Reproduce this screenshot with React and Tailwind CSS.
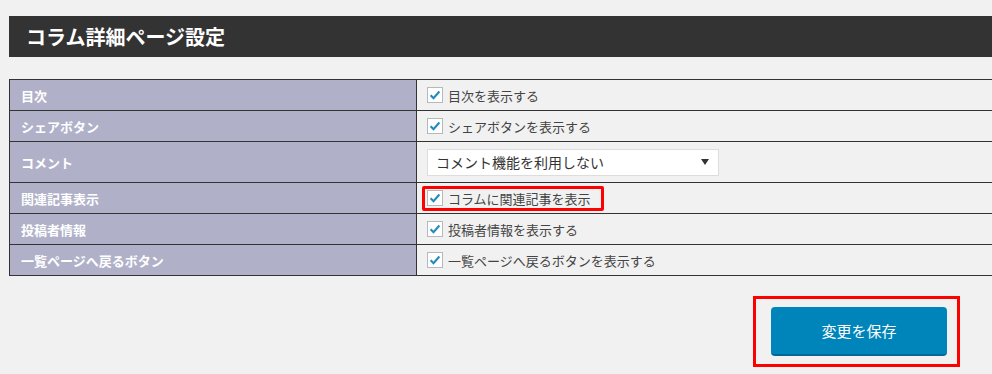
import React from 'react';

const rows = [
  { label: '目次', text: '目次を表示する' },
  { label: 'シェアボタン', text: 'シェアボタンを表示する' },
  { label: 'コメント', select: 'コメント機能を利用しない' },
  { label: '関連記事表示', text: 'コラムに関連記事を表示', marked: true },
  { label: '投稿者情報', text: '投稿者情報を表示する' },
  { label: '一覧ページへ戻るボタン', text: '一覧ページへ戻るボタンを表示する' },
];

const Check = () => (
  <span className="w-[16px] h-[16px] border border-[#b4b9be] bg-white flex items-center justify-center shrink-0">
    <svg viewBox="0 0 16 16" className="w-[14px] h-[14px]">
      <path d="M3 8.2 L6.3 11.6 L13 4" fill="none" stroke="#1e8cbe" strokeWidth="2.4" />
    </svg>
  </span>
);

const App = () => {
  return (
    <div
      className="w-[992px] h-[374px] overflow-hidden bg-[#f1f1f1] pl-[9px] pt-[16px]"
      style={{ fontFamily: '"Noto Sans CJK JP", "Noto Sans", sans-serif' }}
    >
      <div className="h-[41px] w-[1000px] bg-[#333333] flex items-center pl-[17px]">
        <h1 className="text-white font-bold text-[20px] leading-none">コラム詳細ページ設定</h1>
      </div>

      <div className="mt-[22px] w-[1000px] border-t border-l border-[#333]">
        {rows.map((row) => (
          <div key={row.label} className={`flex border-b border-[#333] ${row.select ? 'h-[41px]' : 'h-[31px]'}`}>
            <div className="w-[407px] shrink-0 bg-[#b0b1c8] border-r border-[#333] flex items-center pl-[11px]">
              <span className="text-white font-bold text-[13px] leading-none">{row.label}</span>
            </div>
            <div className="flex-1 flex items-center pl-[10px]">
              {row.select ? (
                <div className="w-[292px] h-[27px] bg-white border border-[#dddddd] flex items-center justify-between pl-[8px] pr-[9px]">
                  <span className="text-[14px] text-[#333] leading-none">{row.select}</span>
                  <svg viewBox="0 0 8 8" className="w-[8px] h-[8px]">
                    <path d="M0 1 L8 1 L4 7 Z" fill="#333" />
                  </svg>
                </div>
              ) : (
                <div className="relative flex items-center gap-[5px]">
                  <Check />
                  <span className="text-[13px] text-[#444] leading-none">{row.text}</span>
                  {row.marked && (
                    <span className="absolute left-[-5px] top-[-4px] w-[182px] h-[25px] border-[3px] border-[#ff0000] rounded-[2px]" />
                  )}
                </div>
              )}
            </div>
          </div>
        ))}
      </div>

      <div className="flex justify-end pr-[32px] mt-[20px]">
        <div className="w-[207px] h-[71px] border-[3px] border-[#ff0000] pl-[15px] pt-[8px]">
          <button className="w-[176px] h-[49px] bg-[#0085ba] border-b-2 border-[#006799] rounded-[4px] text-white text-[15px] leading-none">
            変更を保存
          </button>
        </div>
      </div>
    </div>
  );
};

export default App;
